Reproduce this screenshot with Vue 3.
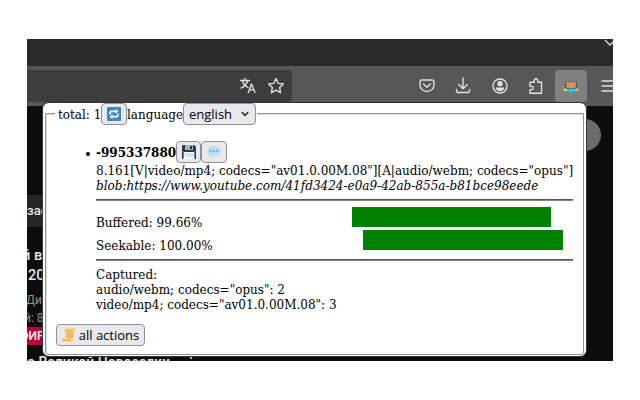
<script setup>
const stats = [
  { name: 'Buffered', value: '99.66%', start: 256, width: 199 },
  { name: 'Seekable', value: '100.00%', start: 267, width: 200 }
]
</script>

<template>
  <main class="screen">
    <div class="browser">
      <div class="tabs">
        <svg class="tabs-chevron" viewBox="0 0 10 10"><path d="M1 1l5 5 5-5" /></svg>
      </div>
      <div class="toolbar">
        <div class="address">
          <svg class="icon translate" viewBox="0 0 18 18"><path d="M1.500 3.500h9M6 1.500v2M3.400 3.500C4 6.500 6 8.800 9 10.500M8.800 3.500C8 6.800 5.500 9.500 2 11.200M9.300 15.500l3.200-8.500 3.500 8.500M10.400 12.800h4.400" /></svg>
          <svg class="icon star" viewBox="0 0 18 18"><path d="M9 1.500l2.200 4.800 5.200.6-3.800 3.600 1 5.200L9 13.100l-4.600 2.600 1-5.200-3.800-3.600 5.200-.6z" /></svg>
        </div>
        <div class="tools">
          <svg class="icon" viewBox="0 0 18 18"><path d="M3.700 3h10.600q1.700 0 1.700 1.700v3.400a7 6.400 0 0 1-14 0V4.700Q2 3 3.700 3zM5.500 7l3.500 3.200L12.500 7" /></svg>
          <svg class="icon" viewBox="0 0 18 18"><path d="M9 1v10.600M4.800 7.600L9 11.800l4.200-4.200M2.500 12.500v1.500q0 1.500 1.500 1.500h10q1.500 0 1.500-1.500v-1.500" /></svg>
          <svg class="icon" viewBox="0 0 18 18"><circle cx="9" cy="9" r="7" /><circle class="solid" cx="9" cy="6.700" r="2.600" /><path class="solid" d="M4.600 10.500h8.800q-.7 3.700-4.400 3.700t-4.400-3.700z" /></svg>
          <svg class="icon" viewBox="0 0 18 18"><path d="M3 8V5.200h4.200V3.500a1.800 1.800 0 0 1 3.600 0v1.700h3.700v11H3v-3.600h1.800a1.600 1.600 0 0 0 0-3.200H3z" /></svg>
          <div class="extension">
            <svg viewBox="0 0 18 16"><path fill="#e8d3a5" d="M1 10h16v2.500l-3 .5H4l-3-.5z" /><path fill="#00d7e7" d="M4.500 10.500h9v2.500h-2l-1 2H8l-1-2H4.500z" /><path fill="#333f4a" d="M2.500 2h13v8.500h-13z" /><path fill="#cd9266" d="M3 3h12l-1 7H4z" /><path fill="#8b7565" d="M3 2h12v1.500H3z" /></svg>
          </div>
          <svg class="icon menu" viewBox="0 0 18 18"><path d="M1 4h16M1 9h16M1 14h16" /></svg>
        </div>
      </div>
      <div class="page">
        <span class="avatar"></span>
        <div class="chip">зас</div>
        <div class="head one">й в</div>
        <div class="head two">20</div>
        <div class="meta one">Дим</div>
        <div class="meta two">й: 8</div>
        <div class="live">ФИР</div>
        <div class="news">о Великой Новоселки <span class="more">⋮</span></div>
      </div>

      <section class="popup">
        <div class="frame"></div>
        <div class="content">
          <header class="legend">
            <span class="total">total: 1</span>
            <button class="btn refresh"><svg viewBox="0 0 14 14"><rect width="14" height="14" rx="1" fill="#3b88c3" /><path d="M3 7.500V6q0-1.700 1.700-1.700H9M11 6.500V8q0 1.700-1.700 1.700H5" fill="none" stroke="#fff" stroke-width="1.700" /><path d="M8.500 1.900l3 2.400-3 2.400zM5.500 7.300l-3 2.400 3 2.400z" fill="#fff" /></svg></button>
            <span class="language">language</span>
            <button class="btn select"><span>english</span><svg viewBox="0 0 8 6"><path d="M.8 1l3.200 3.400L7.200 1" /></svg></button>
          </header>

          <article>
            <div class="title">
              <i class="bullet"></i>
              <b>-995337880</b>
              <button class="btn save"><svg viewBox="0 0 14 14"><path d="M0 1q0-1 1-1h11l2 2v11q0 1-1 1H1q-1 0-1-1z" fill="#31373d" /><path d="M3 0h8v5H3z" fill="#9db5c3" /><path d="M8 1h2v3H8z" fill="#31373d" /><path d="M2 7h10v7H2z" fill="#f5f8fa" /><path d="M3 9h8M3 11h8" stroke="#bac6cd" /><path d="M1 6h1v8H1zM12 6h1v8h-1z" fill="#5b87a8" /></svg></button>
              <button class="btn speech"><svg viewBox="0 0 14 14"><path d="M7 1.200c4 0 7 2 7 4.800s-3 4.900-7 4.900l-1.400-.1Q4.300 12.500 1.700 13q1.300-1.500 1-3Q0 8.500 0 6c0-2.800 3-4.800 7-4.800z" fill="#bddef4" /><g fill="#387bac"><circle cx="3.800" cy="6" r=".85" /><circle cx="7" cy="6" r=".85" /><circle cx="10.200" cy="6" r=".85" /></g></svg></button>
            </div>
            <div class="line codec">8.161[V|video/mp4; codecs="av01.0.00M.08"][A|audio/webm; codecs="opus"]</div>
            <div class="line url">blob:https://www.youtube.com/41fd3424-e0a9-42ab-855a-b81bce98eede</div>
            <div class="rule"></div>
            <div class="stats">
              <div v-for="s in stats" :key="s.name" class="stat">
                <span class="stat-label">{{ s.name }}: {{ s.value }}</span>
                <span class="bar" :style="{ marginLeft: s.start + 'px', width: s.width + 'px' }"></span>
              </div>
            </div>
            <div class="rule"></div>
            <div class="captured">
              <div class="line">Captured:</div>
              <div class="line">audio/webm; codecs="opus": 2</div>
              <div class="line">video/mp4; codecs="av01.0.00M.08": 3</div>
            </div>
          </article>
          <button class="btn actions">
            <svg viewBox="0 0 14 14"><path d="M2 1q0-1 1-1h10q1 0 1 1.500T12.500 3H12v8.500q0 2.500-2 2.500H1.500Q0 14 0 12.500T1.500 11H3V3q-1 0-1-2z" fill="#ffd983" /><path d="M3 2.700h9M0 12q1-1 2 0h7" stroke="#e39f3d" fill="none" /><path d="M4.500 5H11M4.500 7H11M4.500 9H11" stroke="#c88a45" stroke-width=".8" /></svg>
            <span>all actions</span>
          </button>
        </div>
      </section>
    </div>
  </main>
</template>

<style>
body { margin: 0; background: #fff; }
</style>

<style scoped>
* { box-sizing: border-box; }
.screen { width: 640px; height: 400px; padding: 39px 27px; background: #fff; overflow: hidden; }
.browser { position: relative; width: 586px; height: 322px; overflow: hidden; background: #0d0d0d; }
.tabs { height: 27px; background: #2b2b2b; display: flex; justify-content: flex-end; overflow: hidden; }
.tabs-chevron { width: 10px; height: 10px; margin-right: -1px; fill: none; stroke: #ddd; stroke-width: 1.3; }
.toolbar { height: 40px; padding-top: 4px; background: #575757; display: flex; }
.address { flex: none; width: 265px; height: 32px; border-radius: 0 4px 4px 0; background: #3d3d3d; display: flex; align-items: center; justify-content: flex-end; gap: 10px; padding-right: 7px; }
.icon { width: 18px; height: 18px; flex: none; fill: none; stroke: #e2e2e2; stroke-width: 1.35; stroke-linecap: round; stroke-linejoin: round; }
.icon .solid { fill: #e2e2e2; stroke: none; }
.tools { flex: none; height: 32px; margin-left: 126px; display: flex; align-items: center; gap: 18.400px; }
.extension { flex: none; width: 32px; height: 32px; margin-left: -9px; margin-right: -4px; border-radius: 4px; background: #808080; display: grid; place-items: center; }
.extension svg { width: 16px; height: 15px; }
.page { position: relative; height: 255px; color: #e6e6e6; font-family: Roboto, sans-serif; white-space: nowrap; display: flex; flex-direction: column; }
.page > div { flex: none; }
.avatar { position: absolute; left: 542px; top: 13px; width: 32px; height: 32px; border-radius: 50%; background: #6b6b6b; }
.chip { margin-top: 89px; width: 20px; height: 32px; line-height: 32px; background: #252525; font-size: 13px; font-weight: 500; }
.head { font-size: 14.500px; font-weight: 500; line-height: 20px; }
.head.one { margin-top: 19px; margin-left: -5px; }
.head.two { padding-left: 1px; }
.meta { color: #929292; font-size: 12px; line-height: 18px; }
.meta.one { margin-top: 5px; margin-left: -1px; }
.meta.two { margin-left: -3px; }
.live { width: 40px; height: 18px; margin-left: -8px; line-height: 19px; font-size: 12px; font-weight: 500; background: #bd0031; color: #fff; }
.news { margin-top: 9px; font-size: 14px; font-weight: 500; line-height: 16px; }
.more { margin-left: 10px; }

.popup { position: absolute; left: 15px; top: 63px; width: 545px; height: 255px; background: #fff; border: 1px solid #343434; border-radius: 7px; color: #000; font: 13.350px/15px "DejaVu Serif Condensed", "DejaVu Serif", serif; font-stretch: condensed; }
.frame { position: absolute; left: 2px; top: 10px; right: 2px; bottom: 1px; border: 1px solid #929292; border-radius: 0 0 3px 3px; box-shadow: inset 1px 1px #dedee2; }
.content { position: relative; display: flex; flex-direction: column; align-items: flex-start; padding-left: 13px; }
.legend { display: flex; align-items: center; height: 22px; width: 202px; padding-left: 2px; background: #fff; margin-left: -1px; }
.total { width: 44px; white-space: nowrap; padding-left: 1px; }
.language { width: 56px; white-space: nowrap; }
.btn { flex: none; height: 22px; border: 1px solid #8f8f9d; border-radius: 4px; background: #e9e9ed; padding: 0; display: flex; align-items: center; justify-content: center; color: #000; font: 13px/20px "Open Sans", "Noto Sans", sans-serif; }
.btn svg { width: 14px; height: 14px; flex: none; }
.refresh { width: 26px; }
.btn.select { width: 73px; justify-content: space-between; padding: 0 6px 0 5px; }
.btn.select svg { width: 8px; height: 6px; fill: none; stroke: #222; stroke-width: 1.5; }
article { width: 477px; margin-left: 40px; margin-top: 16px; }
.title { display: flex; align-items: center; height: 22px; }
.title b { width: 80px; }
.bullet { width: 4px; height: 4px; border-radius: 50%; background: #000; margin-left: -10px; margin-right: 6px; margin-top: 3px; }
.save { width: 25px; }
.speech { width: 26px; }
.line { white-space: nowrap; height: 15px; }
.url { font-style: italic; letter-spacing: .01px; }
.rule { height: 2px; margin-top: 6px; background: #555; border-bottom: 1px solid #858585; }
.stats { display: flex; flex-direction: column; gap: 3px; padding-top: 6px; height: 52px; }
.stat { display: grid; height: 20px; }
.stat-label, .bar { grid-area: 1 / 1; }
.stat-label { padding-top: 8px; white-space: nowrap; }
.bar { height: 20px; background: #008000; }
.captured { padding-top: 6px; }
.actions { width: 89px; margin-top: 12px; gap: 3px; white-space: nowrap; }
</style>
